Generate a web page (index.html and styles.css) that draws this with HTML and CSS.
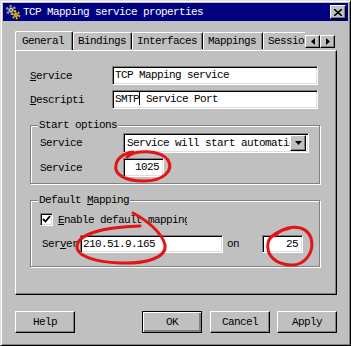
FILE: index.html
```html
<!DOCTYPE html>
<html lang="en">
<head>
    <meta charset="UTF-8">
    <title>TCP Mapping service properties</title>
    <link rel="stylesheet" href="styles.css">
</head>
<body>
<div class="window">
    <div class="titlebar">
        <svg class="app-icon" width="16" height="16" viewBox="0 0 16 16">
            <circle cx="6" cy="6" r="3.6" fill="none" stroke="#9a9a9a" stroke-width="3" stroke-dasharray="2 1.8"/>
            <circle cx="6" cy="6" r="2.6" fill="#d8d8d8" stroke="#606060" stroke-width="1"/>
            <circle cx="6" cy="6" r="1" fill="#404040"/>
            <circle cx="11" cy="11" r="3" fill="none" stroke="#e8c000" stroke-width="2.6" stroke-dasharray="1.6 1.5"/>
            <circle cx="11" cy="11" r="2.2" fill="#ffe040" stroke="#806000" stroke-width="0.8"/>
            <circle cx="11" cy="11" r="0.8" fill="#604000"/>
        </svg>
        <span class="title">TCP Mapping service properties</span>
        <span class="close-btn">
            <svg width="8" height="7" viewBox="0 0 8 7"><path d="M0 0 L8 7 M8 0 L0 7" stroke="#000" stroke-width="1.6"/></svg>
        </span>
    </div>

    <div class="tabstrip">
        <div class="tabs">
            <div class="tab selected w-general">General</div>
            <div class="tab w-bindings">Bindings</div>
            <div class="tab w-interfaces">Interfaces</div>
            <div class="tab w-mappings">Mappings</div>
            <div class="tab w-sessions">Sessions</div>
        </div>
        <div class="tab-arrows">
            <span class="arrow-btn"><svg width="4" height="7" viewBox="0 0 4 7"><path d="M4 0 L0 3.5 L4 7 Z" fill="#000"/></svg></span>
            <span class="arrow-btn"><svg width="4" height="7" viewBox="0 0 4 7"><path d="M0 0 L4 3.5 L0 7 Z" fill="#000"/></svg></span>
        </div>
    </div>

    <div class="panel">
        <div class="row">
            <span class="label"><u>S</u>ervice</span>
            <div class="field wide">TCP Mapping service</div>
        </div>
        <div class="row">
            <span class="label"><u>D</u>escripti</span>
            <div class="field wide">SMTP<span class="caret"></span> Service Port</div>
        </div>

        <div class="group start-options">
            <span class="group-title">Start options</span>
            <div class="group-row first">
                <span class="glabel">Service</span>
                <div class="field combo">
                    <span class="combo-text">Service will start automatically</span>
                    <span class="combo-btn"><svg width="7" height="4" viewBox="0 0 7 4"><path d="M0 0 L7 0 L3.5 4 Z" fill="#000"/></svg></span>
                </div>
            </div>
            <div class="group-row">
                <span class="glabel">Service</span>
                <div class="field port">1025</div>
            </div>
        </div>

        <div class="group default-mapping">
            <span class="group-title">Default <u>M</u>apping</span>
            <div class="check-row">
                <span class="checkbox">
                    <svg width="9" height="9" viewBox="0 0 9 9"><path d="M1 4 L3.5 6.5 L8 1" fill="none" stroke="#000" stroke-width="1.8"/></svg>
                </span>
                <span class="check-label"><u>E</u>nable default mapping</span>
            </div>
            <div class="server-row">
                <span class="slabel">Ser<u>v</u>er</span>
                <div class="field server">210.51.9.165</div>
                <span class="on">on</span>
                <div class="field port small">25</div>
            </div>
        </div>
    </div>

    <div class="buttons">
        <span class="btn">Help</span>
        <span class="spacer"></span>
        <span class="btn default">OK</span>
        <span class="btn">Cancel</span>
        <span class="btn">Apply</span>
    </div>

    <svg class="marks" width="351" height="346" viewBox="0 0 351 346">
        <g fill="none" stroke="#e41414" stroke-width="3" stroke-linecap="round">
            <path d="M127 157 C 134 150, 160 149, 168 160 C 174 170, 164 181, 144 181 C 124 181, 114 174, 116 165 C 117 158, 124 153, 133 152"/>
            <path d="M133 213 C 146 220, 162 232, 165 245 C 167 258, 145 264, 120 263 C 95 262, 76 256, 77 246 C 78 235, 100 227, 140 226"/>
            <path d="M275 236 C 282 226, 305 222, 311 238 C 315 252, 305 266, 290 265 C 275 264, 266 255, 268 243 C 269 236, 280 230, 290 228"/>
        </g>
    </svg>
</div>
</body>
</html>
```

FILE: styles.css
```css
body {
    margin: 0;
    font-family: "Liberation Mono", "DejaVu Sans Mono", monospace;
    font-size: 11px;
    letter-spacing: -0.6px;
    color: #000;
}
.window {
    position: relative;
    width: 351px;
    height: 346px;
    box-sizing: border-box;
    background: #c0c0c0;
    border: 1px solid;
    border-color: #dfdfdf #000 #000 #dfdfdf;
    box-shadow: inset 1px 1px #fff, inset -1px -1px #808080;
    padding: 2px;
    display: flex;
    flex-direction: column;
}
.titlebar {
    height: 18px;
    background: #000080;
    color: #fff;
    display: flex;
    align-items: center;
    padding: 0 2px;
}
.app-icon {
    margin-right: 2px;
}
.title {
    flex: 1;
    line-height: 12px;
}
.close-btn,
.arrow-btn,
.combo-btn {
    display: flex;
    align-items: center;
    justify-content: center;
    box-sizing: border-box;
    background: #c0c0c0;
    border: 1px solid;
    border-color: #fff #000 #000 #fff;
    box-shadow: inset -1px -1px #808080;
}
.close-btn {
    width: 16px;
    height: 14px;
}
.tabstrip {
    display: flex;
    height: 19px;
    margin: 10px 0 0 12px;
    position: relative;
    z-index: 1;
}
.tabs {
    display: flex;
    align-items: flex-end;
    width: 290px;
    overflow: hidden;
}
.tab {
    flex: none;
    box-sizing: border-box;
    height: 17px;
    border-top: 1px solid #fff;
    border-left: 1px solid #fff;
    border-right: 1px solid #000;
    box-shadow: inset -1px 0 #808080;
    border-radius: 2px 2px 0 0;
    line-height: 16px;
    padding-left: 4px;
    white-space: nowrap;
    margin-bottom: 1px;
    overflow: hidden;
}
.tab.selected {
    height: 20px;
    margin-bottom: -1px;
    background: #c0c0c0;
    padding-left: 6px;
    line-height: 18px;
}
.w-general { width: 58px; }
.w-bindings { width: 59px; }
.w-interfaces { width: 71px; }
.w-mappings { width: 60px; }
.w-sessions { width: 50px; }
.tab-arrows {
    display: flex;
    margin-top: 4px;
}
.arrow-btn {
    width: 15px;
    height: 13px;
}
.panel {
    height: 245px;
    box-sizing: border-box;
    margin: 0 11px 0 12px;
    border: 1px solid;
    border-color: #fff #000 #000 #fff;
    box-shadow: inset -1px -1px #808080;
    padding: 15px 0 0 14px;
}
.row {
    display: flex;
    align-items: center;
    margin-bottom: 5px;
}
.label {
    width: 82px;
}
.field {
    box-sizing: border-box;
    background: #fff;
    border: 1px solid;
    border-color: #808080 #fff #fff #808080;
    box-shadow: inset 1px 1px #000, inset -1px -1px #dfdfdf;
    height: 19px;
    padding: 0 2px;
    line-height: 17px;
    white-space: nowrap;
    overflow: hidden;
}
.wide {
    width: 206px;
}
.caret {
    display: inline-block;
    width: 1px;
    height: 13px;
    background: #000;
    vertical-align: -3px;
}
.group {
    box-sizing: border-box;
    width: 290px;
    border: 1px solid #808080;
    box-shadow: inset 1px 1px #fff, 1px 1px #fff;
    padding: 0 0 0 9px;
}
.start-options {
    margin-top: 16px;
    height: 59px;
}
.default-mapping {
    margin-top: 16px;
    height: 67px;
}
.group-title {
    display: block;
    width: max-content;
    margin: -7px 0 0 -2px;
    padding: 0 1px;
    background: #c0c0c0;
    line-height: 12px;
}
.group-row {
    display: flex;
    align-items: center;
    margin-top: 5px;
}
.group-row.first {
    margin-top: 2px;
}
.glabel {
    width: 83px;
}
.combo {
    width: 186px;
    height: 20px;
    display: flex;
    align-items: center;
    padding: 2px;
}
.combo-text {
    flex: 1;
    overflow: hidden;
    padding-left: 1px;
}
.combo-btn {
    width: 16px;
    height: 16px;
    flex: none;
}
.port {
    width: 41px;
    text-align: right;
    padding-right: 4px;
}
.port.small {
    height: 18px;
}
.check-row {
    display: flex;
    align-items: center;
    margin-top: 7px;
    height: 13px;
}
.checkbox {
    box-sizing: border-box;
    width: 13px;
    height: 13px;
    background: #fff;
    border: 1px solid;
    border-color: #808080 #fff #fff #808080;
    box-shadow: inset 1px 1px #000, inset -1px -1px #dfdfdf;
    display: flex;
    align-items: center;
    justify-content: center;
}
.check-label {
    margin-left: 5px;
    width: 129px;
    overflow: hidden;
    white-space: nowrap;
}
.server-row {
    display: flex;
    align-items: center;
    margin: 9px 0 0 2px;
}
.slabel {
    width: 38px;
    overflow: hidden;
    white-space: nowrap;
}
.server {
    width: 143px;
    height: 18px;
}
.on {
    width: 39px;
    padding-left: 4px;
    box-sizing: border-box;
}
.buttons {
    display: flex;
    gap: 8px;
    margin: 16px 11px 0 12px;
    height: 22px;
}
.spacer {
    flex: 1;
}
.btn {
    box-sizing: border-box;
    width: 60px;
    height: 22px;
    display: flex;
    align-items: center;
    justify-content: center;
    border: 1px solid;
    border-color: #fff #000 #000 #fff;
    box-shadow: inset -1px -1px #808080;
}
.btn.default {
    border-color: #000;
    box-shadow: inset 1px 1px #fff, inset -2px -2px #808080;
}
.btn:last-child {
    margin-left: -1px;
}
.marks {
    position: absolute;
    left: -1px;
    top: -1px;
    pointer-events: none;
}
```
